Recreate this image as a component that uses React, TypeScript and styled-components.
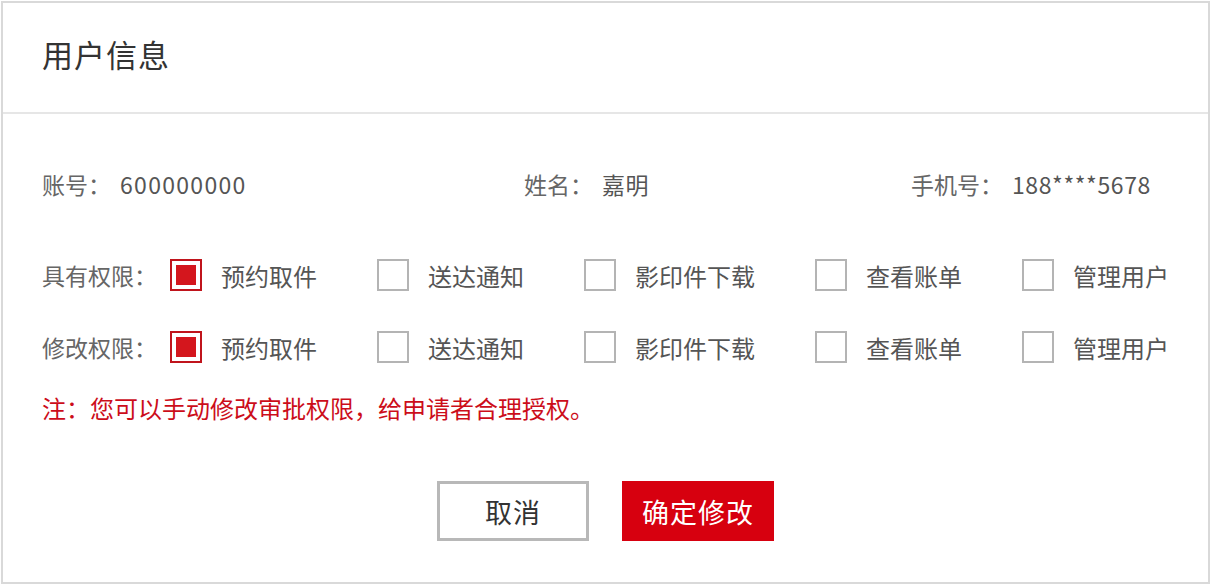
import React from "react";
import styled, { createGlobalStyle } from "styled-components";

const GlobalStyle = createGlobalStyle`
  html, body { margin: 0; padding: 0; background: #ffffff; }
  body { font-family: "Noto Sans CJK SC", "Noto Sans", sans-serif; }
  * { box-sizing: border-box; }
`;

const Panel = styled.div`
  margin: 1px 2px 0 1px;
  width: 1209px;
  height: 583px;
  border: 2px solid #d9d9d9;
  display: flex;
  flex-direction: column;
  background: #fff;
`;

const Header = styled.div`
  height: 111px;
  border-bottom: 2px solid #e6e6e6;
  display: flex;
  align-items: center;
  padding: 0 0 8px 39px;
`;

const Title = styled.h1`
  margin: 0;
  font-size: 31px;
  line-height: 1;
  font-weight: 400;
  color: #333;
  letter-spacing: 1px;
`;

const Body = styled.div`
  padding: 50px 0 0 39px;
  display: flex;
  flex-direction: column;
`;

const InfoRow = styled.div`
  display: grid;
  grid-template-columns: 482px 387px 1fr;
  height: 40px;
  align-items: center;
`;

const Field = styled.div`
  display: flex;
  align-items: center;
  font-size: 23px;
  color: #666;
  white-space: nowrap;
`;

const FieldValue = styled.span<{ $spacing: number }>`
  margin-left: 9px;
  color: #555;
  font-size: 23px;
  letter-spacing: ${(p) => p.$spacing}px;
`;

const PermRow = styled.div<{ $top: number }>`
  display: flex;
  align-items: center;
  height: 40px;
  margin-top: ${(p) => p.$top}px;
`;

const PermLabel = styled.div`
  width: 128px;
  flex: none;
  font-size: 23px;
  color: #666;
  white-space: nowrap;
`;

const Option = styled.label`
  display: flex;
  align-items: center;
  flex: none;
  margin-right: 60px;
  font-size: 24px;
  color: #555;
  white-space: nowrap;
  cursor: pointer;
`;

const Box = styled.span<{ $checked: boolean }>`
  width: 32px;
  height: 32px;
  border: 2px solid ${(p) => (p.$checked ? "#c0141c" : "#b4b4b4")};
  padding: 4px;
  margin-right: 19px;
  display: inline-block;
  flex: none;
  &::after {
    content: "";
    display: ${(p) => (p.$checked ? "block" : "none")};
    width: 20px;
    height: 20px;
    background: #d4161d;
  }
`;

const Note = styled.p`
  margin: 26px 0 0 0;
  font-size: 24px;
  line-height: 30px;
  color: #cc0d1a;
  white-space: nowrap;
`;

const Actions = styled.div`
  display: flex;
  justify-content: center;
  gap: 33px;
  margin-top: 58px;
  margin-left: -39px;
`;

const Button = styled.button<{ $primary?: boolean }>`
  width: 152px;
  height: 60px;
  font-family: inherit;
  font-size: 27px;
  letter-spacing: 1px;
  cursor: pointer;
  border: ${(p) => (p.$primary ? "none" : "3px solid #b8b8b8")};
  background: ${(p) => (p.$primary ? "#d7000f" : "#fff")};
  color: ${(p) => (p.$primary ? "#fff" : "#333")};
  padding: 0;
`;

const options = ["预约取件", "送达通知", "影印件下载", "查看账单", "管理用户"];

function PermissionRow({ label, top }: { label: string; top: number }) {
  return (
    <PermRow $top={top}>
      <PermLabel>{label}</PermLabel>
      {options.map((o, i) => (
        <Option key={o}>
          <Box $checked={i === 0} />
          <span>{o}</span>
        </Option>
      ))}
    </PermRow>
  );
}

export default function App() {
  return (
    <>
      <GlobalStyle />
      <Panel>
        <Header>
          <Title>用户信息</Title>
        </Header>
        <Body>
          <InfoRow>
            <Field>
              账号：<FieldValue $spacing={1.3}>600000000</FieldValue>
            </Field>
            <Field>
              姓名：<FieldValue $spacing={0.5}>嘉明</FieldValue>
            </Field>
            <Field>
              手机号：<FieldValue $spacing={0.6}>188****5678</FieldValue>
            </Field>
          </InfoRow>
          <PermissionRow label="具有权限：" top={51} />
          <PermissionRow label="修改权限：" top={32} />
          <Note>注：您可以手动修改审批权限，给申请者合理授权。</Note>
          <Actions>
            <Button>取消</Button>
            <Button $primary>确定修改</Button>
          </Actions>
        </Body>
      </Panel>
    </>
  );
}
